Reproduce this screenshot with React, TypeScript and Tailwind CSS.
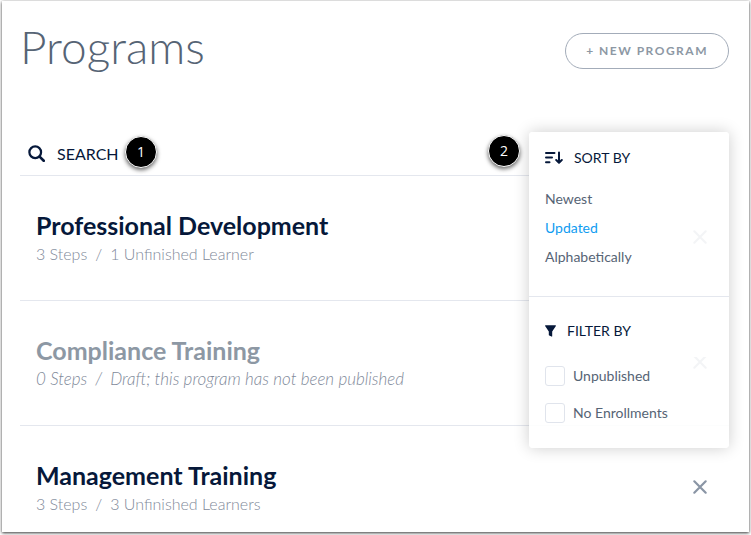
import { useState } from "react";
import clsx from "clsx";

type Program = {
  title: string,
  steps: string,
  status: string,
  draft?: boolean,
};

const programs: Program[] = [
  { title: "Professional Development", steps: "3 Steps", status: "1 Unfinished Learner" },
  { title: "Compliance Training", steps: "0 Steps", status: "Draft; this program has not been published", draft: true },
  { title: "Management Training", steps: "3 Steps", status: "3 Unfinished Learners" },
];

const sortOptions = ["Newest", "Updated", "Alphabetically"];
const filterOptions = ["Unpublished", "No Enrollments"];

function SearchIcon() {
  return (
    <svg className="size-[17px] shrink-0" viewBox="0 0 16 16" fill="none" stroke="currentColor" strokeWidth="2.1" aria-hidden="true">
      <circle cx="6.8" cy="6.8" r="5.5" />
      <path d="m10.9 10.9 3.9 3.9" strokeWidth="2.5" strokeLinecap="round" />
    </svg>
  );
}

function SortIcon() {
  return (
    <svg className="h-4 w-[18px]" viewBox="0 0 18 16" fill="none" stroke="currentColor" strokeWidth="2" strokeLinecap="round" aria-hidden="true">
      <path d="M1 3h8.5M1 7.6h6M1 12.2h3.5" />
      <path d="M14 2.6v10M11.2 10l2.8 2.8 2.8-2.8" strokeLinejoin="round" />
    </svg>
  );
}

function FilterIcon() {
  return (
    <svg className="h-4 w-[11px]" viewBox="0 0 11 16" fill="currentColor" aria-hidden="true">
      <path d="M.6 2.2h9.8c.5 0 .7.5.5.9L7.2 8.6v4.6c0 .3-.3.5-.6.4l-2.4-1c-.2-.1-.4-.3-.4-.5V8.6L.1 3.1c-.2-.4 0-.9.5-.9z" />
    </svg>
  );
}

function CloseIcon() {
  return (
    <svg className="size-4" viewBox="0 0 16 16" fill="none" stroke="currentColor" strokeWidth="2.2" strokeLinecap="round" aria-hidden="true">
      <path d="m2.3 2.3 11.4 11.4M13.7 2.3 2.3 13.7" />
    </svg>
  );
}

function Badge({ value, className }: { value: number, className: string }) {
  return (
    <span className={clsx("absolute flex size-8 items-center justify-center rounded-full border border-white bg-black font-['Open_Sans',sans-serif] text-sm text-white shadow-[0_2px_4px_rgba(0,0,0,0.6)]", className)}>
      {value}
    </span>
  );
}

function ProgramRow({ title, steps, status, draft }: Program) {
  return (
    <li className="flex items-start justify-between border-t border-[#e4e7ee] pt-[35px] pr-[17px] pb-[34px] pl-4 last:pb-4">
      <div>
        <h2 className={clsx("text-[25px] leading-7 font-bold", draft ? "text-[#8d98a4]" : "text-[#06183a]")}>{title}</h2>
        <p className={clsx("flex gap-2 pt-[3px] leading-6 font-light text-[#7f8a9a]", draft ? "text-[17px] italic" : "text-base")}>
          <span>{steps}</span>
          <span>/</span>
          <span>{status}</span>
        </p>
      </div>
      <button className="mt-3.5 p-1 text-[#8a95a5]" aria-label={`Remove ${title}`}>
        <CloseIcon />
      </button>
    </li>
  );
}

function SortFilterPanel() {
  const [sortBy, setSortBy] = useState("Updated");
  return (
    <aside className="absolute top-0 right-0 w-[200px] overflow-hidden rounded bg-white/90 text-sm text-[#566475] shadow-[0_0_16px_rgba(0,0,0,0.2)]">
      <h3 className="flex h-[52px] items-center gap-[11px] bg-white px-4 text-[#06183a]">
        <SortIcon />
        SORT BY
      </h3>
      <ul className="border-b border-[#e4e7ee] pb-[25px]">
        {sortOptions.map((option) => (
          <li key={option}>
            <button
              className={clsx("block h-[29px] px-4", option === sortBy && "text-[#109cf1]")}
              onClick={() => setSortBy(option)}
            >
              {option}
            </button>
          </li>
        ))}
      </ul>
      <h3 className="flex h-[60px] items-center gap-[11px] bg-white px-4 pt-2 text-[#06183a]">
        <FilterIcon />
        FILTER BY
      </h3>
      <div className="flex flex-col gap-[17px] px-4 pt-[9px] pb-[25px]">
        {filterOptions.map((option) => (
          <label key={option} className="flex items-center gap-2">
            <input type="checkbox" className="size-5 appearance-none rounded-[3px] border border-[#e0e4ec] bg-white checked:bg-[#109cf1]" />
            {option}
          </label>
        ))}
      </div>
    </aside>
  );
}

export default function App() {
  return (
    <div className="bg-white px-0.5 pt-px pb-[3px] font-[Lato,sans-serif]">
      <main className="bg-white pr-5 pl-[18px] shadow-[0_1px_3px_rgba(0,0,0,0.8)]">
        <header className="flex items-center justify-between pt-3.5 pb-[53px]">
          <h1 className="text-[46px] leading-[64px] font-light text-[#566475]">Programs</h1>
          <button className="mt-2 h-9 rounded-full border border-[#a3acb9] px-5 text-xs font-bold tracking-[1.5px] text-[#8d98a4]">
            + NEW PROGRAM
          </button>
        </header>
        <section className="relative">
          <label className="flex h-[43px] items-center gap-3 px-2 text-[#06183a]">
            <SearchIcon />
            <input
              type="search"
              aria-label="Search"
              placeholder="SEARCH"
              className="w-full text-base outline-none placeholder:text-[#06183a]"
            />
          </label>
          <ul>
            {programs.map((program) => (
              <ProgramRow key={program.title} {...program} />
            ))}
          </ul>
          <Badge value={1} className="top-1 left-[105px]" />
          <Badge value={2} className="top-[3px] right-[209px]" />
          <SortFilterPanel />
        </section>
      </main>
    </div>
  );
}
